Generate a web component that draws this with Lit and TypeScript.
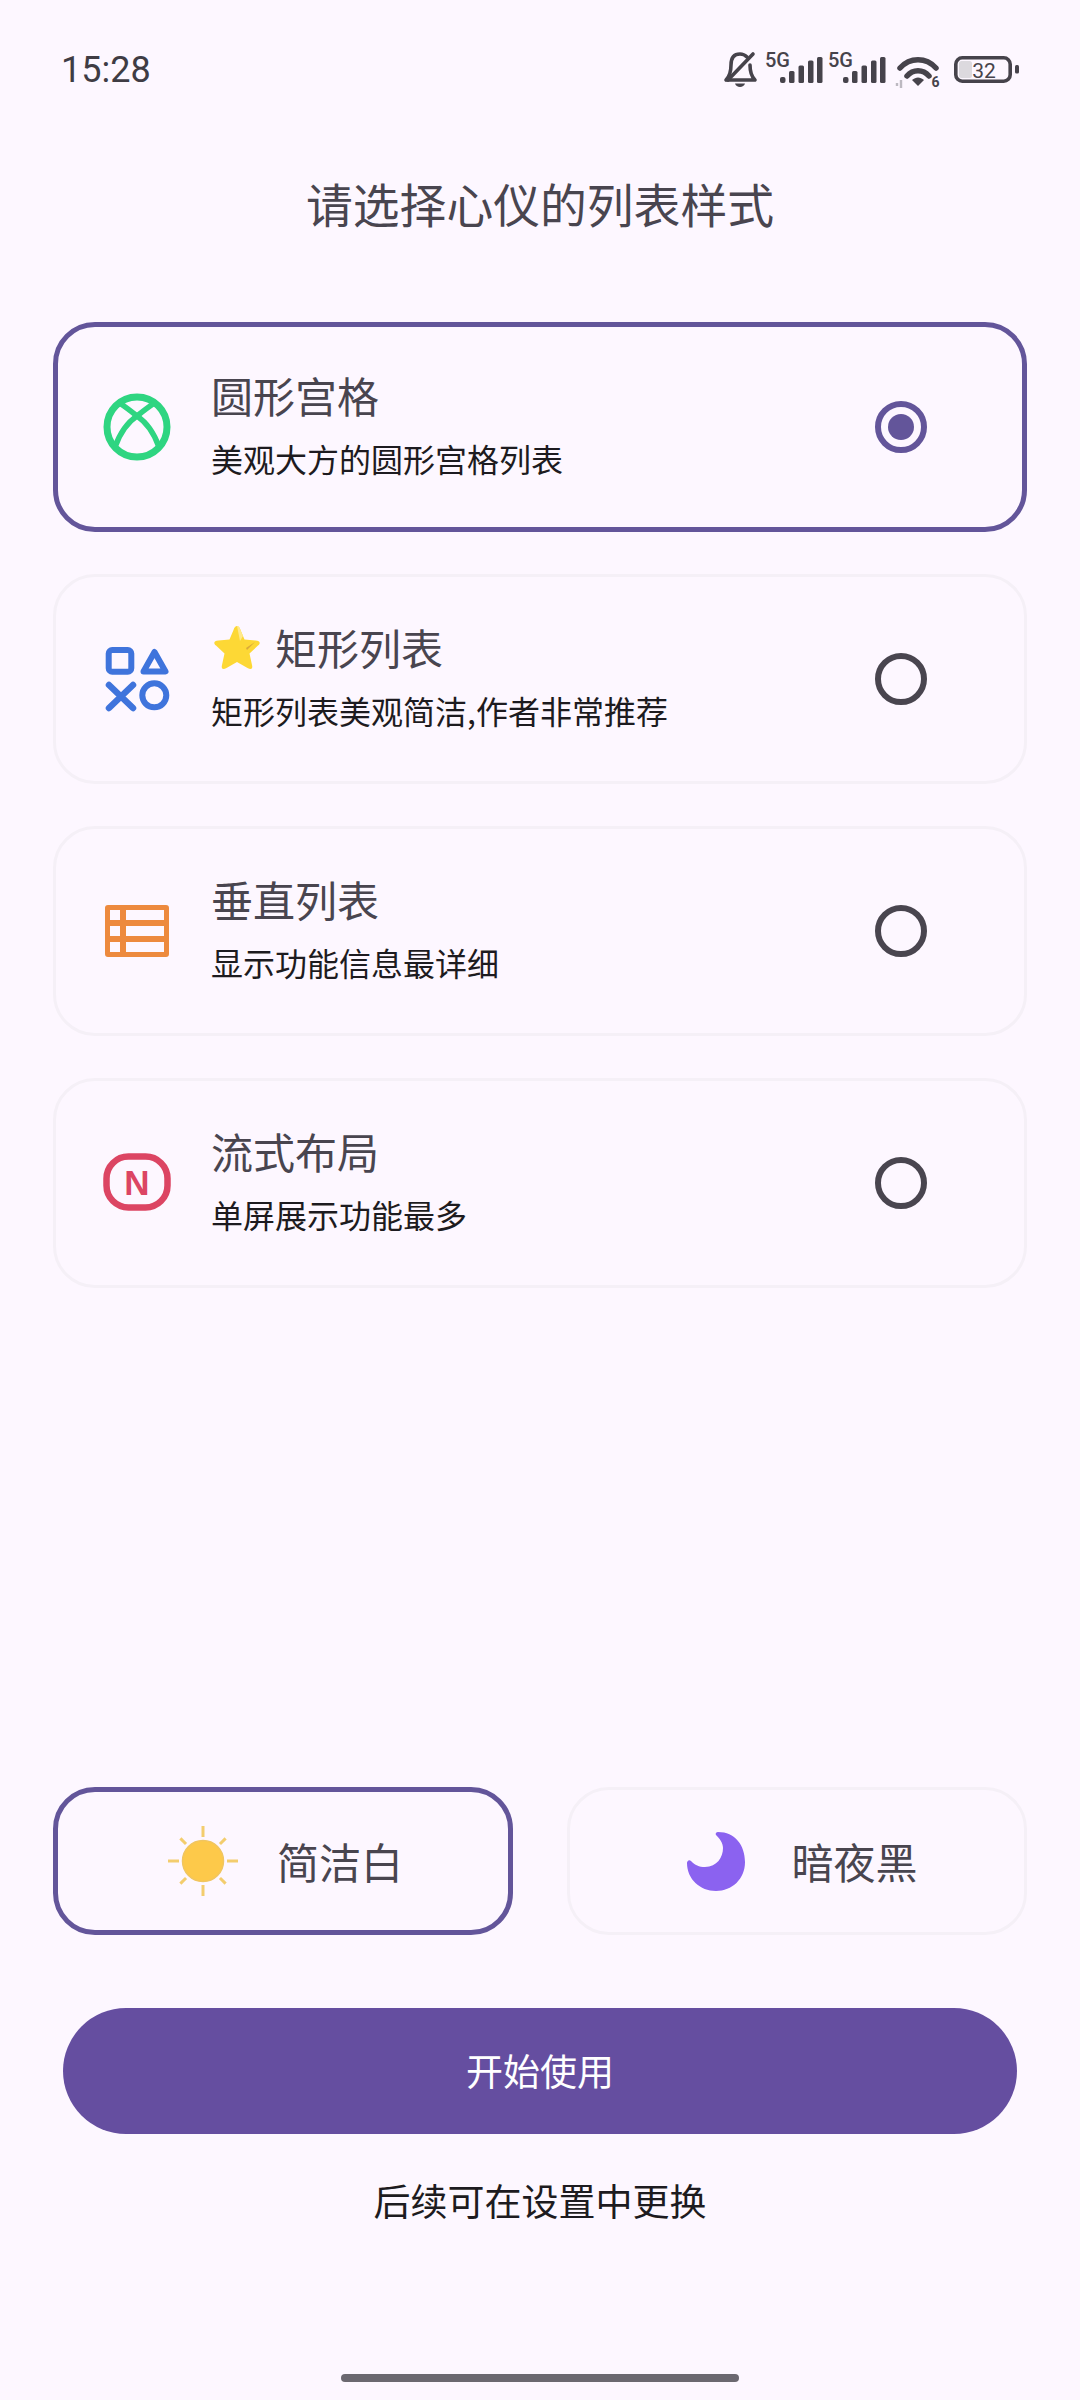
import { LitElement, html, css, svg } from "lit";
import { customElement } from "lit/decorators.js";

const xbox = html`<svg width="68" height="68" viewBox="0 0 68 68" fill="none" stroke="#2fd581">
  <circle cx="34" cy="34" r="30" stroke-width="7"/>
  <path d="M12 54C17 40 25 29 34 23C39 19 44 15 50 11" stroke-width="5.500"/>
  <path d="M56 54C51 40 43 29 34 23C29 19 24 15 18 11" stroke-width="5.500"/>
</svg>`;

const ps = html`<svg width="68" height="68" viewBox="0 0 68 68" fill="none" stroke="#3f74dc" stroke-width="6" stroke-linecap="round" stroke-linejoin="round">
  <rect x="5.700" y="5" width="22.600" height="21.700" rx="3.500"/>
  <path d="M51.500 7L62.500 26.500H40.500Z"/>
  <path d="M6 40L30 63M30 40L6 63" stroke-width="6.500"/>
  <circle cx="51.300" cy="50.300" r="12"/>
</svg>`;

const table = html`<svg width="68" height="68" viewBox="0 0 68 68">
  <path fill="#ed8a3e" fill-rule="evenodd" d="M5 8H63a3 3 0 0 1 3 3V57a3 3 0 0 1-3 3H5a3 3 0 0 1-3-3V11a3 3 0 0 1 3-3ZM7 13V23H17V13ZM23 13V23H61V13ZM7 29V39H17V29ZM23 29V39H61V29ZM7 45V55H17V45ZM23 45V55H61V45Z"/>
</svg>`;

const nIcon = html`<svg width="68" height="68" viewBox="0 0 68 68">
  <rect x="3.500" y="7.500" width="61" height="51" rx="22" fill="none" stroke="#dc4563" stroke-width="6.500"/>
  <text x="34" y="46" text-anchor="middle" font-family="Liberation Sans, Arial, sans-serif" font-weight="700" font-size="35" fill="#dc4563">N</text>
</svg>`;

const star = html`<svg class="star" width="48" height="46" viewBox="0 0 48 46">
  <path d="M24 2C25.500 2 26.500 3 27.500 6L31.500 15.500L42.500 16.500C47 17 48 19 45 21.500L36.500 29.500L39 41C40 45 38 46 34.500 44L24 38L13.500 44C10 46 8 45 9 41L11.500 29.500L3 21.500C0 19 1 17 5.500 16.500L16.500 15.500L20.500 6C21.500 3 22.500 2 24 2Z" fill="#fdd835"/>
  <path d="M24 2C25.500 2 26.500 3 27.500 6L30 12L27 17C26 12 25 7 24 2Z" fill="#ffe98a"/>
  <path d="M33 24L42 18L37 23L34 26Z" fill="#d9a93a"/>
</svg>`;

const rays = [0, 45, 90, 135, 180, 225, 270, 315];
const sun = html`<svg width="72" height="72" viewBox="0 0 72 72">
  ${rays.map(
    (a) => svg`<line x1="36" y1="${a % 90 ? 4 : 1}" x2="36" y2="12" stroke="#f3cd6e" stroke-width="3" transform="rotate(${a} 36 36)"/>`
  )}
  <circle cx="36" cy="36" r="20.500" fill="#fdc94a" stroke="#f0c560" stroke-width="1.500"/>
</svg>`;

const moon = html`<svg width="62" height="64" viewBox="0 0 62 64">
  <path d="M33 3C50 3 60 16 60 33C60 50 47 62 31 62C15 62 2 50 2 34C2 32 4 30 6 32C10 36 14 38 20 38C32 38 38 28 38 19C38 14 35 10 31 6C30 5 31 3 33 3Z" fill="#8b62f0"/>
</svg>`;

const bars = (x: number) => svg`
  <g fill="#46434b">
    <rect x="${x}" y="32" width="5.500" height="6" rx="2"/>
    <rect x="${x + 9}" y="26" width="5.500" height="12" rx="1.500"/>
    <rect x="${x + 18.5}" y="20.500" width="5.500" height="17.500" rx="1.500"/>
    <rect x="${x + 28}" y="15.500" width="5.500" height="22.500" rx="1.500"/>
    <rect x="${x + 37}" y="12" width="5.500" height="26" rx="1.500"/>
  </g>`;

const statusIcons = html`<svg width="300" height="50" viewBox="0 0 300 50">
  <g fill="none" stroke="#46434b" stroke-width="3.600" stroke-linecap="round" stroke-linejoin="round">
    <path d="M6 35C10 31 11 27 11 20C11 12 15 9 20 9C23 9 25 10 27 12M30 20C30 27 31 31 35 35H6"/>
    <path d="M8 35L33 9"/>
  </g>
  <path d="M15 38.500H25C24 43 16 43 15 38.500Z" fill="#46434b"/>
  <text x="45" y="22" font-family="Roboto, sans-serif" font-weight="500" font-size="20" fill="#46434b">5G</text>
  ${bars(60)}
  <text x="108" y="22" font-family="Roboto, sans-serif" font-weight="500" font-size="20" fill="#46434b">5G</text>
  ${bars(123)}
  <g fill="none" stroke="#46434b" stroke-width="5.500" stroke-linecap="round">
    <path d="M180 23C190 12 206 12 216 23"/>
    <path d="M187 31C193 24 203 24 209 31"/>
  </g>
  <path d="M192 35C196 31.500 200 31.500 204 35L198 41Z" fill="#46434b"/>
  <path d="M177 41V38M181 43V35" stroke="#bdb9c1" stroke-width="2.400" fill="none"/>
  <text x="211.500" y="42" font-family="Roboto, sans-serif" font-weight="700" font-size="14" fill="#46434b">6</text>
  <rect x="235.800" y="12.800" width="54.400" height="23.400" rx="6.500" fill="none" stroke="#46434b" stroke-width="3.600"/>
  <rect x="239" y="16" width="13" height="17" rx="2.500" fill="#dcd9de"/>
  <text x="264" y="33" text-anchor="middle" font-family="Roboto, sans-serif" font-size="21" fill="#46434b">32</text>
  <rect x="295" y="20" width="4" height="8.500" rx="1.500" fill="#46434b"/>
</svg>`;

const items = [
  { icon: xbox, title: "圆形宫格", sub: "美观大方的圆形宫格列表", selected: true, star: false },
  { icon: ps, title: "矩形列表", sub: "矩形列表美观简洁,作者非常推荐", selected: false, star: true },
  { icon: table, title: "垂直列表", sub: "显示功能信息最详细", selected: false, star: false },
  { icon: nIcon, title: "流式布局", sub: "单屏展示功能最多", selected: false, star: false },
];

@customElement("app-root")
export class AppRoot extends LitElement {
  static styles = css`
    :host {
      display: block;
      width: 1080px;
      height: 2400px;
      background: #fdf7ff;
      font-family: "Noto Sans CJK SC", "Noto Sans", sans-serif;
      color: #49454f;
    }
    * { box-sizing: border-box; }
    .page {
      height: 2400px;
      display: flex;
      flex-direction: column;
      padding: 0 53px;
    }
    .status {
      height: 140px;
      margin: 0 -53px;
      padding: 0 60px 0 61px;
      display: flex;
      align-items: center;
      justify-content: space-between;
    }
    .time {
      font-family: Roboto, sans-serif;
      font-size: 36px;
      font-weight: 400;
      color: #3f3c44;
      line-height: 1;
    }
    .status svg { display: block; }
    h1 {
      margin: 28px 0 2px;
      height: 70px;
      line-height: 70px;
      font-size: 46.800px;
      font-weight: 400;
      text-align: center;
      color: #49454f;
    }
    .list {
      margin-top: 82px;
      display: flex;
      flex-direction: column;
      gap: 42px;
    }
    .card {
      height: 210px;
      border-radius: 42px;
      border: 3px solid #f5f0f7;
      display: flex;
      align-items: center;
      padding: 0 97px 0 47px;
    }
    .card.sel { border: 5px solid #63559a; padding: 0 95px 0 45px; }
    .icon { width: 68px; height: 68px; flex: none; }
    .icon svg { display: block; }
    .text {
      margin-left: 40px;
      flex: 1;
      display: flex;
      flex-direction: column;
      gap: 13px;
      padding-bottom: 8px;
    }
    .title {
      display: flex;
      align-items: center;
      gap: 14px;
      font-size: 42px;
      line-height: 56px;
      color: #49454f;
    }
    .star { margin-left: 2px; flex: none; }
    .sub {
      font-size: 32px;
      line-height: 44px;
      color: #1d1b20;
    }
    .radio {
      width: 52px;
      height: 52px;
      flex: none;
      border-radius: 50%;
      border: 6px solid #49454f;
      display: flex;
      align-items: center;
      justify-content: center;
    }
    .radio.on { border-color: #63559a; }
    .radio.on i { display: block; width: 26px; height: 26px; border-radius: 50%; background: #63559a; }
    .themes {
      margin-top: auto;
      display: grid;
      grid-template-columns: 460px 460px;
      justify-content: space-between;
    }
    .theme {
      height: 148px;
      border-radius: 42px;
      border: 3px solid #f5f0f7;
      display: flex;
      align-items: center;
      justify-content: center;
      gap: 44px;
      padding: 0 0 0 9px;
      font-size: 42px;
      color: #49454f;
    }
    .theme span { padding-bottom: 2px; }
    .theme.sel { border: 5px solid #63559a; gap: 38px; padding: 0 0 0 4px; }
    .theme svg { display: block; }
    .btn {
      margin: 73px 10px 0;
      height: 126px;
      padding-bottom: 3px;
      border-radius: 63px;
      background: #654ea0;
      color: #fff;
      font-size: 37px;
      display: flex;
      align-items: center;
      justify-content: center;
    }
    .hint {
      margin-top: 41px;
      height: 50px;
      line-height: 50px;
      text-align: center;
      font-size: 37px;
      color: #1d1b20;
    }
    .home {
      margin: 149px auto 18px;
      width: 398px;
      height: 8px;
      border-radius: 4px;
      background: #6b6870;
    }
  `;

  render() {
    return html`<div class="page">
      <div class="status">
        <span class="time">15:28</span>
        ${statusIcons}
      </div>
      <h1>请选择心仪的列表样式</h1>
      <div class="list">
        ${items.map(
          (it) => html`<div class="card ${it.selected ? "sel" : ""}">
            <div class="icon">${it.icon}</div>
            <div class="text">
              <div class="title">${it.star ? star : ""}<span>${it.title}</span></div>
              <div class="sub">${it.sub}</div>
            </div>
            <div class="radio ${it.selected ? "on" : ""}">${it.selected ? html`<i></i>` : ""}</div>
          </div>`
        )}
      </div>
      <div class="themes">
        <div class="theme sel">${sun}<span>简洁白</span></div>
        <div class="theme">${moon}<span>暗夜黑</span></div>
      </div>
      <div class="btn">开始使用</div>
      <div class="hint">后续可在设置中更换</div>
      <div class="home"></div>
    </div>`;
  }
}
